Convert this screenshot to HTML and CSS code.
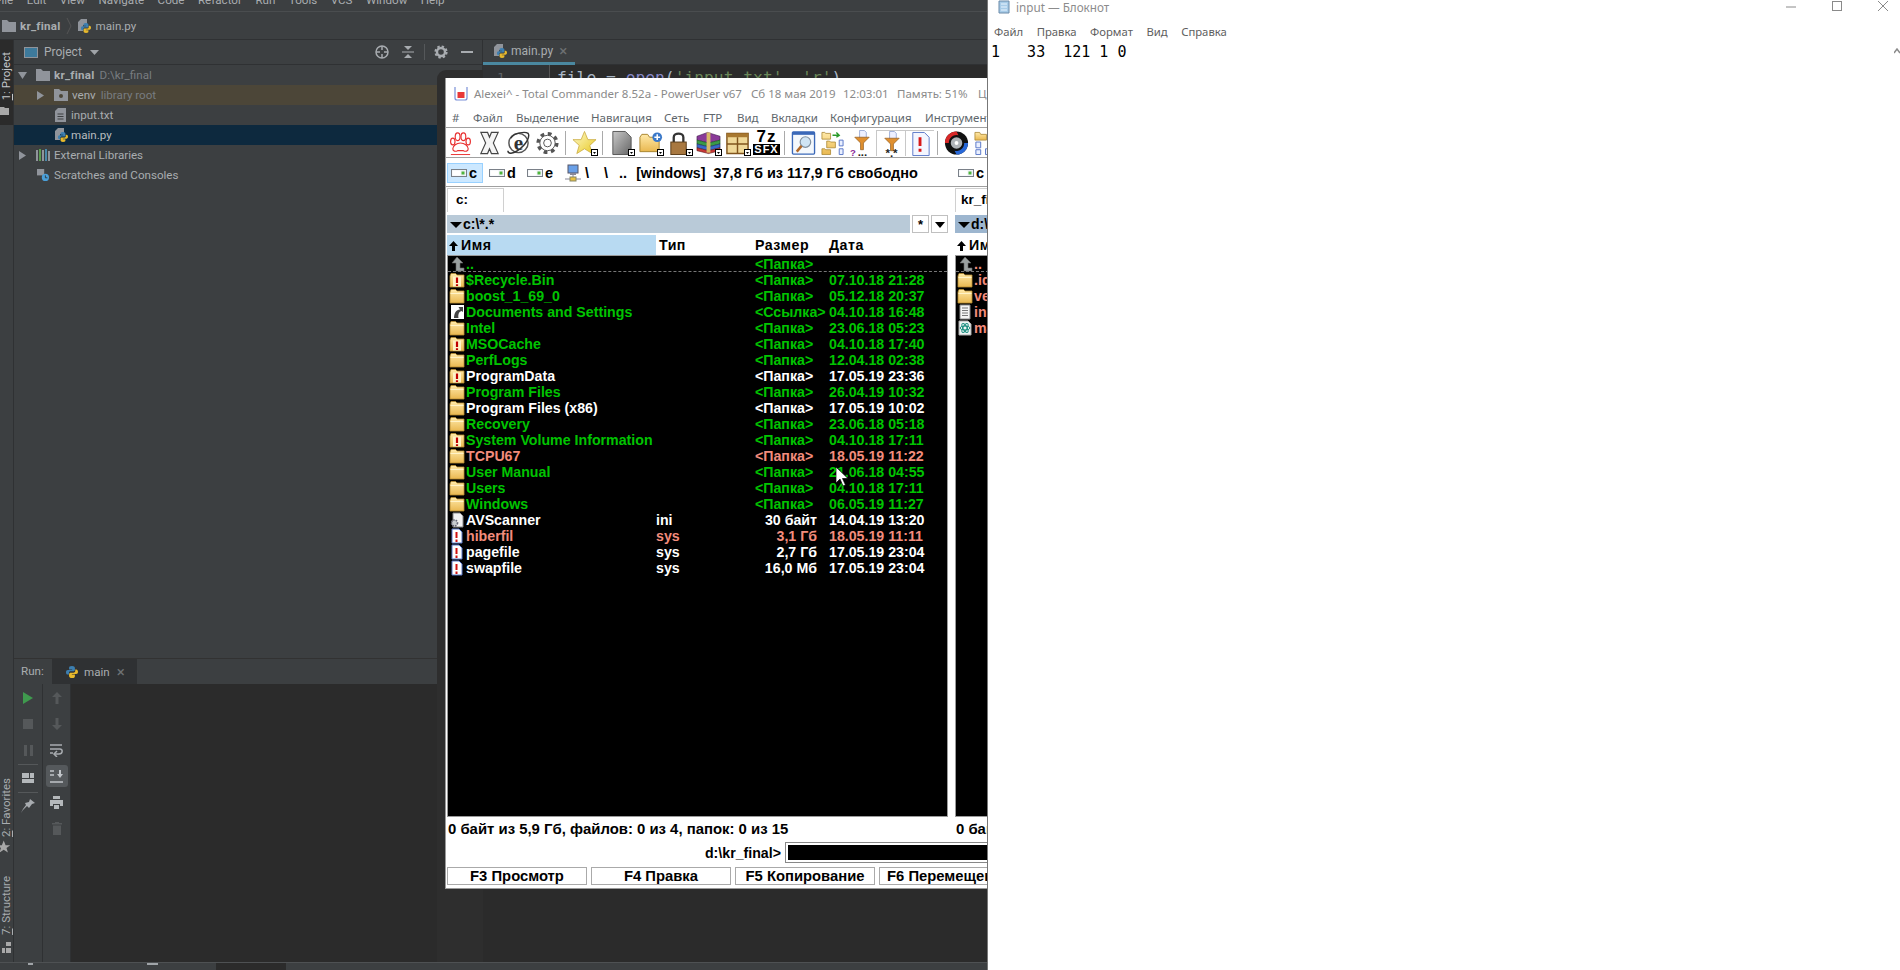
FILE: index.html
```html
<!DOCTYPE html>
<html lang="ru">
<head>
    <meta charset="UTF-8">
    <title>Total Commander</title>
    <link rel="stylesheet" href="styles.css">
</head>
<body>
<svg class="sprite" xmlns="http://www.w3.org/2000/svg">
    <defs>
        <linearGradient id="gr-folder" x1="0" y1="0" x2="0" y2="1"><stop offset="0" stop-color="#ffe9a8"/><stop offset="1" stop-color="#e9b850"/></linearGradient>
        <linearGradient id="gr-star" x1="0" y1="0" x2="1" y2="1"><stop offset="0" stop-color="#fffbd0"/><stop offset="1" stop-color="#e8c820"/></linearGradient>
        <linearGradient id="gr-page" x1="0" y1="0" x2="1" y2="1"><stop offset="0" stop-color="#c8c8c8"/><stop offset="1" stop-color="#666"/></linearGradient>
    </defs>
    <symbol id="py" viewBox="0 0 14 14">
        <path d="M7 0C4 0 3.600 1 3.600 2.400V4H7.200V4.600H2.200C.8 4.600 0 5.600 0 7.200S.8 10 2 10H3.400V8.200C3.400 7 4.300 6.200 5.400 6.200H8.600C9.600 6.200 10.400 5.400 10.400 4.400V2.400C10.400 1 9.200 0 7 0Z" fill="#3d7fb0"/>
        <path d="M7 14C10 14 10.400 13 10.400 11.600V10H6.800V9.400H11.800C13.200 9.400 14 8.400 14 6.800S13.200 4 12 4H10.800V5.800C10.800 7 9.700 7.800 8.600 7.800H5.400C4.400 7.800 3.600 8.600 3.600 9.600V11.600C3.600 13 4.800 14 7 14Z" fill="#e8b92c"/>
    </symbol>
    <symbol id="py-doc" viewBox="0 0 14 14">
        <path d="M3 0H9V6H5V12H0V3Z" fill="#90949b"/>
        <use href="#py" x="3" y="4" width="10" height="10"/>
    </symbol>
    <symbol id="ij-folder" viewBox="0 0 14 12">
        <path d="M0 0H5L7 2H14V12H0Z" fill="#90949b"/>
    </symbol>
    <symbol id="f-plain" viewBox="0 0 16 16">
        <path d="M1 4V15H15V3H8L6.500 1.500H2Z" fill="url(#gr-folder)" stroke="#b58a30" stroke-width=".8"/>
        <path d="M1.500 5.500H14.500" stroke="#fff3c8"/>
    </symbol>
    <symbol id="f-warn" viewBox="0 0 16 16">
        <path d="M1 4V15H15V3H8L6.500 1.500H2Z" fill="url(#gr-folder)" stroke="#b58a30" stroke-width=".8"/>
        <rect x="4" y="4.500" width="8" height="10" fill="#fff3c8"/>
        <path d="M8 5.500V11M8 12.200V14" stroke="#c00000" stroke-width="2.200"/>
    </symbol>
    <symbol id="f-link" viewBox="0 0 16 16">
        <rect x="2" y="1" width="13" height="14" fill="#fff"/>
        <path d="M5 14C5 9 7 6 11 5.500L9.500 3H14V8L12.500 7C9.500 8 9 11 9.500 14Z" fill="#444"/>
    </symbol>
    <symbol id="f-up" viewBox="0 0 16 16">
        <path d="M8 1L14 7H11V12H15V15H7V7H3Z" fill="#9aa0a0" stroke="#666" stroke-width=".6"/>
    </symbol>
    <symbol id="f-sys" viewBox="0 0 16 16">
        <path d="M3 1H10L13 4V15H3Z" fill="#fff" stroke="#5a78c8"/>
        <path d="M7.500 4V10M7.500 11.500V14" stroke="#d01010" stroke-width="2"/>
    </symbol>
    <symbol id="f-ini" viewBox="0 0 16 16">
        <path d="M4 1H11L14 4V15H4Z" fill="#f2f2f2" stroke="#888"/>
        <circle cx="5.500" cy="11" r="3" fill="#c8ccd0" stroke="#667" stroke-width="1.600" stroke-dasharray="1.500 1"/>
    </symbol>
    <symbol id="f-txt" viewBox="0 0 16 16">
        <path d="M3 1H13V15H3Z" fill="#f4f4f4" stroke="#888"/>
        <path d="M5 4H11M5 6.500H11M5 9H11M5 11.500H11" stroke="#777"/>
    </symbol>
    <symbol id="f-atom" viewBox="0 0 16 16">
        <path d="M2 1H11L14 4V15H2Z" fill="#eef4f4" stroke="#aaa"/>
        <g fill="none" stroke="#1d8f80"><ellipse cx="8" cy="8" rx="5" ry="2"/><ellipse cx="8" cy="8" rx="5" ry="2" transform="rotate(60 8 8)"/><ellipse cx="8" cy="8" rx="5" ry="2" transform="rotate(120 8 8)"/></g>
    </symbol>
    <symbol id="hdd" viewBox="0 0 16 8">
        <rect x=".5" y=".5" width="15" height="7" fill="#eef2f6" stroke="#7a8088"/>
        <rect x="1.500" y="1.500" width="8" height="5" fill="#fff"/>
        <rect x="10.500" y="2.500" width="3" height="3" fill="#4fb43c"/>
    </symbol>
    <symbol id="drop" viewBox="0 0 7 7">
        <rect x=".5" y=".5" width="6" height="6" fill="#fff" stroke="#000"/>
        <path d="M2 3H5L3.500 5Z" fill="#000"/>
    </symbol>
    <symbol id="up-arrow" viewBox="0 0 9 10">
        <path d="M4.500 0L9 5H6V10H3V5H0Z" fill="#000"/>
    </symbol>
</svg>

<div class="ide">
    <div class="ide-menu">
        <span>File</span><span>Edit</span><span>View</span><span>Navigate</span><span>Code</span><span>Refactor</span><span>Run</span><span>Tools</span><span>VCS</span><span>Window</span><span>Help</span>
    </div>
    <div class="ide-nav">
        <svg class="ic14"><use href="#ij-folder"/></svg>
        <b>kr_final</b>
        <svg class="nav-sep" viewBox="0 0 6 18"><path d="M1 1L5 9L1 17" fill="none" stroke="#555"/></svg>
        <span class="py-file"><svg class="ic14"><use href="#py-doc"/></svg></span>
        <span>main.py</span>
    </div>
    <div class="ide-main">
        <div class="strip">
            <div class="strip-active">
                <span class="strip-label"><u>1</u>: Project</span>
                <svg class="strip-icon" viewBox="0 0 13 8"><path d="M0 0H4L5 1H9V8H0Z" fill="#a8a8a8"/></svg>
            </div>
            <div class="strip-spacer"></div>
            <span class="strip-label"><u>2</u>: Favorites</span>
            <svg class="strip-star" viewBox="0 0 14 14"><path d="M4 0L6 5H11L7 8L8.500 13L4 10L-.5 13L1 8L-3 5H2Z" fill="#a8a8a8"/></svg>
            <span class="strip-label strip-gap"><u>7</u>: Structure</span>
            <svg class="strip-icon2" viewBox="0 0 9 11"><path d="M4 0H9V4H4ZM0 6H3V11H0ZM4 6H9V11H4Z" fill="#a8a8a8"/></svg>
        </div>
        <div class="workspace">
            <div class="top-area">
                <div class="project">
                    <div class="project-head">
                        <svg class="project-ico" viewBox="0 0 14 11"><rect x=".5" y=".5" width="13" height="10" fill="#3d7a9c" stroke="#90949b"/></svg>
                        <span class="project-title">Project</span>
                        <svg class="project-arrow" viewBox="0 0 9 5"><path d="M0 0H9L4.500 5Z" fill="#a0a4a8"/></svg>
                        <span class="flex-fill"></span>
                        <span class="head-tool"><svg viewBox="0 0 14 14" width="14" height="14"><circle cx="7" cy="7" r="6" fill="none" stroke="#a8acb0" stroke-width="1.500"/><path d="M7 1V5M7 9V13M1 7H5M9 7H13" stroke="#a8acb0" stroke-width="1.500"/></svg></span>
                        <span class="head-tool"><svg viewBox="0 0 12 14" width="12" height="14"><path d="M0 7H12" stroke="#a8acb0"/><path d="M2 1H10L6 5ZM2 13H10L6 9Z" fill="#a8acb0"/></svg></span>
                        <span class="head-sep"></span>
                        <span class="head-tool"><svg viewBox="0 0 14 14" width="14" height="14"><circle cx="7" cy="7" r="4" fill="none" stroke="#a8acb0" stroke-width="2.400"/><circle cx="7" cy="7" r="5.600" fill="none" stroke="#a8acb0" stroke-width="2" stroke-dasharray="2.400 2"/></svg></span>
                        <span class="head-tool"><svg viewBox="0 0 12 3" width="12" height="3"><rect width="12" height="2" fill="#a8acb0"/></svg></span>
                    </div>
                    <div class="tree">
                        <div class="tree-row d0"><svg class="arr" viewBox="0 0 9 9"><path d="M0 1H9L4.500 8Z" fill="#90949b"/></svg><svg class="ic14"><use href="#ij-folder"/></svg><b>kr_final</b><span class="muted">D:\kr_final</span></div>
                        <div class="tree-row d1 row-lib"><svg class="arr" viewBox="0 0 9 9"><path d="M1 0L8 4.500L1 9Z" fill="#90949b"/></svg><svg class="ic14" viewBox="0 0 14 12"><path d="M0 0H5L7 2H14V12H0Z" fill="#90949b"/><circle cx="7" cy="7" r="2" fill="#4c4638"/></svg><span>venv</span><span class="muted">library root</span></div>
                        <div class="tree-row d2"><svg class="ic-doc" viewBox="0 0 11 14"><path d="M3 0H11V14H0V3Z" fill="#90949b"/><path d="M2.500 6H8.500M2.500 8.500H8.500M2.500 11H8.500" stroke="#3c3f41"/></svg><span>input.txt</span></div>
                        <div class="tree-row d2 row-sel"><span class="py-file"><svg class="ic14"><use href="#py-doc"/></svg></span><span>main.py</span></div>
                        <div class="tree-row d0"><svg class="arr" viewBox="0 0 9 9"><path d="M1 0L8 4.500L1 9Z" fill="#90949b"/></svg><svg class="ic14" viewBox="0 0 14 12"><path d="M1 1V12M4 0V12M7 1V12M10 0V12M13 2V12" stroke-width="2" stroke="#90949b"/><path d="M4 0V12" stroke="#5a9a50" stroke-width="2"/><path d="M10 0V12" stroke="#4a88a8" stroke-width="2"/></svg><span>External Libraries</span></div>
                        <div class="tree-row d0"><span class="arr"></span><svg class="ic14" viewBox="0 0 15 15"><path d="M0 0H9V8H0Z" fill="#90949b"/><circle cx="10.500" cy="10.500" r="4.500" fill="#4a9fd8"/><path d="M10.500 8V11H13" stroke="#2b2b2b" fill="none"/></svg><span>Scratches and Consoles</span></div>
                    </div>
                </div>
                <div class="editor">
                    <div class="editor-tabs">
                        <div class="editor-tab"><span class="py-file"><svg class="ic14"><use href="#py-doc"/></svg></span><span>main.py</span><span class="tab-x">×</span></div>
                    </div>
                    <div class="editor-body">
                        <div class="gutter">1</div>
                        <div class="code">file = <span class="code-fn">open</span>(<span class="code-str">'input.txt', 'r'</span>)</div>
                    </div>
                </div>
            </div>
            <div class="run">
                <div class="run-head">
                    <span class="run-label">Run:</span>
                    <div class="run-tab"><svg class="ic14"><use href="#py"/></svg><span>main</span><span class="tab-x">×</span></div>
                </div>
                <div class="run-body">
                    <div class="run-tools">
                        <span class="tool"><svg viewBox="0 0 10 12" width="10" height="12"><path d="M0 0L10 6L0 12Z" fill="#3f9a4e"/></svg></span>
                        <span class="tool"><svg viewBox="0 0 10 10" width="10" height="10"><rect width="10" height="10" fill="#55585a"/></svg></span>
                        <span class="tool"><svg viewBox="0 0 9 11" width="9" height="11"><path d="M0 0H3V11H0ZM6 0H9V11H6Z" fill="#55585a"/></svg></span>
                        <span class="tool-sep"></span>
                        <span class="tool"><svg viewBox="0 0 12 10" width="12" height="10"><path d="M0 0H7V5H0ZM8 0H12V5H8ZM0 6H12V10H0Z" fill="#b4b8bb"/></svg></span>
                        <span class="tool-sep"></span>
                        <span class="tool"><svg viewBox="0 0 14 14" width="14" height="14"><path d="M9 0L14 4L11 5L8 9L6 7L2 11L0 14L2 10L5 6L4 4L8 3Z" fill="#a8acb0"/></svg></span>
                    </div>
                    <div class="run-tools">
                        <span class="tool"><svg viewBox="0 0 10 12" width="10" height="12"><path d="M5 0L10 5H6.500V12H3.500V5H0Z" fill="#55585a"/></svg></span>
                        <span class="tool"><svg viewBox="0 0 10 12" width="10" height="12"><path d="M5 12L10 7H6.500V0H3.500V7H0Z" fill="#55585a"/></svg></span>
                        <span class="tool"><svg viewBox="0 0 13 13" width="13" height="13"><path d="M0 1H12M0 5H10C13 5 13 10 9 10H5" fill="none" stroke="#a8acb0" stroke-width="1.500"/><path d="M0 9H3M7 7L4 10L7 13" fill="none" stroke="#a8acb0" stroke-width="1.500"/></svg></span>
                        <span class="tool tool-on"><svg viewBox="0 0 13 13" width="13" height="13"><path d="M0 1H4M0 5H4M0 12H13" stroke="#c0c4c8" stroke-width="1.500"/><path d="M7 4H13L10 8ZM9 0H11V5H9Z" fill="#c0c4c8"/></svg></span>
                        <span class="tool"><svg viewBox="0 0 13 13" width="13" height="13"><path d="M3 0H10V3H3ZM0 4H13V10H10V8H3V10H0ZM4 9H9V13H4Z" fill="#b4b8bb"/></svg></span>
                        <span class="tool"><svg viewBox="0 0 10 13" width="10" height="13"><path d="M3 0H7V1H10V2.500H0V1H3ZM1 3.500H9V13H1Z" fill="#55585a"/></svg></span>
                    </div>
                    <div class="run-output"></div>
                </div>
            </div>
        </div>
    </div>
    <div class="ide-status"><i class="st-a"></i><i class="st-b"></i><i class="st-c"></i></div>
</div>

<div class="tc-shadow"></div>

<div class="tc">
    <div class="tc-title">
        <svg class="tc-logo" viewBox="0 0 14 15"><path d="M1 1V12C1 13.500 2 14 3 14H11C12 14 13 13.500 13 12V1" fill="none" stroke="#7a90d8" stroke-width="1.200"/><rect x="3.500" y="6" width="7" height="6" fill="#e83838"/></svg>
        <span class="tt-main">Alexei^ - Total Commander 8.52a - PowerUser v67</span>
        <span class="tt-date">Сб 18 мая 2019</span>
        <span class="tt-time">12:03:01</span>
        <span class="tt-mem">Память: 51%</span>
        <span class="tt-cpu">Ц</span>
    </div>
    <div class="tc-menu">
        <span class="m1">#</span><span class="m2">Файл</span><span class="m3">Выделение</span><span class="m4">Навигация</span><span class="m5">Сеть</span><span class="m6">FTP</span><span class="m7">Вид</span><span class="m8">Вкладки</span><span class="m9">Конфигурация</span><span class="m10">Инструменты</span>
    </div>
    <div class="tc-toolbar">
        <span class="tb"><svg viewBox="0 0 26 26"><g fill="#fff" stroke="#e83030" stroke-width="1.200"><path d="M13 13C9 13 5 16 5 19C5 22 8 22 10 21H16C18 22 21 22 21 19C21 16 17 13 13 13Z"/><ellipse cx="5" cy="11.500" rx="2.300" ry="3.500"/><ellipse cx="10" cy="6.500" rx="2.500" ry="4"/><ellipse cx="16" cy="6.500" rx="2.500" ry="4"/><ellipse cx="21" cy="11.500" rx="2.300" ry="3.500"/></g><path d="M3 25H23" stroke="#e83030"/></svg></span>
        <span class="tb"><svg viewBox="0 0 26 26"><path d="M4 2H11L13 7L15 2H22L17 13L22 24H15L13 19L11 24H4L9 13Z" fill="#f4f4f4" stroke="#444" stroke-width="1.200"/></svg></span>
        <span class="tb"><svg viewBox="0 0 26 26"><circle cx="13" cy="13" r="10" fill="#fff" stroke="#555" stroke-width="1.500"/><path d="M5 8C9 2 20 1 23 3C25 6 22 14 12 21C6 25 2 24 2 21" fill="none" stroke="#333" stroke-width="1.500"/><text x="13" y="20" text-anchor="middle" class="svg-e">e</text></svg></span>
        <span class="tb"><svg viewBox="0 0 26 26"><circle cx="13" cy="13" r="9.500" fill="none" stroke="#555" stroke-width="4" stroke-dasharray="3.800 3.660"/><circle cx="13" cy="13" r="8" fill="#fff" stroke="#555"/><circle cx="13" cy="13" r="4" fill="#fff" stroke="#555"/></svg></span>
        <span class="tb-sep"></span>
        <span class="tb"><svg viewBox="0 0 26 26"><path d="M13 1L16.500 9.500H25L18.500 15.500L21 24L13 19L5 24L7.500 15.500L1 9.500H9.500Z" fill="url(#gr-star)" stroke="#c8a838" stroke-width=".8"/></svg><svg class="tb-drop"><use href="#drop"/></svg></span>
        <span class="tb-sep"></span>
        <span class="tb"><svg viewBox="0 0 26 26"><path d="M4 1H17L23 7V25H4Z" fill="url(#gr-page)" stroke="#555"/></svg><svg class="tb-drop"><use href="#drop"/></svg></span>
        <span class="tb"><svg viewBox="0 0 26 26"><path d="M2 7L4 4H10L12 7H22V22H2Z" fill="url(#gr-folder)" stroke="#a88430"/><circle cx="20" cy="7" r="5" fill="#3a78c8"/><path d="M20 4V10M17 7H23" stroke="#fff" stroke-width="1.600"/></svg><svg class="tb-drop"><use href="#drop"/></svg></span>
        <span class="tb"><svg viewBox="0 0 26 26"><path d="M7 12V7C7 2 17 2 17 7V12" fill="none" stroke="#333" stroke-width="2.400"/><rect x="4" y="12" width="16" height="13" fill="#a87840" stroke="#5a3c18"/></svg><svg class="tb-drop"><use href="#drop"/></svg></span>
        <span class="tb"><svg viewBox="0 0 26 26"><path d="M1 6L12 2L25 6V10L13 13L1 10Z" fill="#8a3a98" stroke="#3a1a48" stroke-width=".6"/><path d="M1 10L13 13L25 10V14L13 17L1 14Z" fill="#3a9a48" stroke="#1a4a20" stroke-width=".6"/><path d="M1 14L13 17L25 14V18L13 21L1 18Z" fill="#3868c8" stroke="#182a58" stroke-width=".6"/><path d="M1 18L13 21L25 18V21L13 24L1 21Z" fill="#c83838" stroke="#581818" stroke-width=".6"/><rect x="11" y="2" width="4" height="21" fill="#d8b868"/></svg><svg class="tb-drop"><use href="#drop"/></svg></span>
        <span class="tb"><svg viewBox="0 0 26 26"><path d="M2 3H24V24H2Z" fill="#f0d898" stroke="#80541c" stroke-width="1.500"/><path d="M2 3H24V7H2Z" fill="#a87830"/><path d="M2 14H24M13 7V24" stroke="#80541c" stroke-width="1.500"/></svg><svg class="tb-drop"><use href="#drop"/></svg></span>
        <span class="tb tb-7z"><span class="t7">7z</span><span class="tsfx">SFX</span></span>
        <span class="tb-sep"></span>
        <span class="tb"><svg viewBox="0 0 26 26"><rect x="1.500" y="1.500" width="23" height="23" rx="1" fill="#f4f8fc" stroke="#3a68b8" stroke-width="1.400"/><path d="M1.500 1.500H24.500V4.500H1.500Z" fill="#3a68b8"/><circle cx="15" cy="12" r="5.500" fill="#cfe4f4" stroke="#8090a0" stroke-width="1.200"/><path d="M11 16L6 22" stroke="#b06828" stroke-width="2.600"/></svg></span>
        <span class="tb"><svg viewBox="0 0 26 26"><path d="M2 2H5L6 3H11V9H2ZM7 11H10L11 12H16V18H7ZM2 19H5L6 20H11V25H2Z" fill="url(#gr-folder)" stroke="#a88430" stroke-width=".8"/><path d="M13 5H20M17 2L20 5L17 7" fill="none" stroke="#2a9a2a" stroke-width="1.500"/><path d="M20 10H24V16H20ZM20 19H24V25H20Z" fill="#eaf0ff" stroke="#5a78c8"/></svg></span>
        <span class="tb"><svg viewBox="0 0 26 26"><path d="M11 0H16L18 2V8H11Z" fill="#eef0ff" stroke="#7a90c8" stroke-width=".7"/><path d="M6 7H21L15 13V20H12V13Z" fill="#e09030" stroke="#905818" stroke-width=".7"/><text x="1" y="26" class="svg-q">?</text><text x="9" y="26" class="svg-d">...</text></svg></span>
        <span class="tb tb-hover"><svg viewBox="0 0 26 26"><path d="M11 0H16L18 2V8H11Z" fill="#eef0ff" stroke="#7a90c8" stroke-width=".7"/><path d="M6 7H21L15 13V20H12V13Z" fill="#e09030" stroke="#905818" stroke-width=".7"/><text x="13" y="26" text-anchor="middle" class="svg-d">*.*</text></svg></span>
        <span class="tb tb-hover"><svg viewBox="0 0 26 26"><path d="M5 1H17L22 6V25H5Z" fill="#f4f6ff" stroke="#5a78c8"/><path d="M12.500 6V15M12.500 18V21" stroke="#d81818" stroke-width="3"/></svg></span>
        <span class="tb-sep"></span>
        <span class="tb"><svg viewBox="0 0 26 26"><circle cx="13" cy="13" r="12" fill="#111"/><path d="M1 13A12 12 0 0 1 13 1L15 5A8 8 0 0 0 5 13Z" fill="#d82828"/><path d="M25 13A12 12 0 0 1 13 25L11 21A8 8 0 0 0 21 13Z" fill="#2868d8"/><circle cx="13" cy="13" r="6" fill="#b0b4b8"/><circle cx="13" cy="13" r="2" fill="#fff"/></svg></span>
        <span class="tb"><svg viewBox="0 0 26 26"><path d="M2 2H7L8 4H14V10H2Z" fill="url(#gr-folder)" stroke="#a88430" stroke-width=".8"/><path d="M3 12H8V18H3ZM3 20H8V25H3ZM13 19H18V25H13Z" fill="#eaf0ff" stroke="#5a78c8"/></svg></span>
    </div>
    <div class="tc-drives">
        <span class="drive drive-on"><svg class="hdd"><use href="#hdd"/></svg><b>c</b></span>
        <span class="drive"><svg class="hdd"><use href="#hdd"/></svg><b>d</b></span>
        <span class="drive"><svg class="hdd"><use href="#hdd"/></svg><b>e</b></span>
        <svg class="net" viewBox="0 0 16 18"><rect x="3" y="1" width="10" height="8" fill="#6aa0e8" stroke="#556"/><rect x="5" y="9" width="6" height="2" fill="#889"/><path d="M0 15H16M8 11V15" stroke="#889"/><rect x="5" y="13" width="6" height="4" fill="#e8c040" stroke="#886"/></svg>
        <b class="d-root">\</b><b class="d-root2">\</b><b class="d-up">..</b>
        <b class="d-vol">[windows]</b>
        <b class="d-free">37,8 Гб из 117,9 Гб свободно</b>
        <span class="drive drive-right"><svg class="hdd"><use href="#hdd"/></svg><b>c</b></span>
    </div>
    <div class="tc-panels">
        <section class="panel panel-left">
            <div class="panel-tabs"><span class="panel-tab">c:</span></div>
            <div class="path-row">
                <div class="path-bar"><span class="tri"></span>c:\*.*</div>
                <span class="path-btn">*</span>
                <span class="path-btn"><span class="tri"></span></span>
            </div>
            <div class="list-head">
                <span class="col-name col-on"><svg class="up-arrow"><use href="#up-arrow"/></svg>Имя</span>
                <span class="col-ext">Тип</span>
                <span class="col-size">Размер</span>
                <span class="col-date">Дата</span>
            </div>
            <div class="list">
                <div class="row green row-cursor"><svg class="fi"><use href="#f-up"/></svg><span>..</span><span></span><span>&lt;Папка&gt;</span><span></span></div>
                <div class="row green"><svg class="fi"><use href="#f-warn"/></svg><span>$Recycle.Bin</span><span></span><span>&lt;Папка&gt;</span><span>07.10.18 21:28</span></div>
                <div class="row green"><svg class="fi"><use href="#f-plain"/></svg><span>boost_1_69_0</span><span></span><span>&lt;Папка&gt;</span><span>05.12.18 20:37</span></div>
                <div class="row green"><svg class="fi"><use href="#f-link"/></svg><span>Documents and Settings</span><span></span><span>&lt;Ссылка&gt;</span><span>04.10.18 16:48</span></div>
                <div class="row green"><svg class="fi"><use href="#f-plain"/></svg><span>Intel</span><span></span><span>&lt;Папка&gt;</span><span>23.06.18 05:23</span></div>
                <div class="row green"><svg class="fi"><use href="#f-warn"/></svg><span>MSOCache</span><span></span><span>&lt;Папка&gt;</span><span>04.10.18 17:40</span></div>
                <div class="row green"><svg class="fi"><use href="#f-plain"/></svg><span>PerfLogs</span><span></span><span>&lt;Папка&gt;</span><span>12.04.18 02:38</span></div>
                <div class="row white"><svg class="fi"><use href="#f-warn"/></svg><span>ProgramData</span><span></span><span>&lt;Папка&gt;</span><span>17.05.19 23:36</span></div>
                <div class="row green"><svg class="fi"><use href="#f-plain"/></svg><span>Program Files</span><span></span><span>&lt;Папка&gt;</span><span>26.04.19 10:32</span></div>
                <div class="row white"><svg class="fi"><use href="#f-plain"/></svg><span>Program Files (x86)</span><span></span><span>&lt;Папка&gt;</span><span>17.05.19 10:02</span></div>
                <div class="row green"><svg class="fi"><use href="#f-plain"/></svg><span>Recovery</span><span></span><span>&lt;Папка&gt;</span><span>23.06.18 05:18</span></div>
                <div class="row green"><svg class="fi"><use href="#f-warn"/></svg><span>System Volume Information</span><span></span><span>&lt;Папка&gt;</span><span>04.10.18 17:11</span></div>
                <div class="row salmon"><svg class="fi"><use href="#f-plain"/></svg><span>TCPU67</span><span></span><span>&lt;Папка&gt;</span><span>18.05.19 11:22</span></div>
                <div class="row green"><svg class="fi"><use href="#f-plain"/></svg><span>User Manual</span><span></span><span>&lt;Папка&gt;</span><span>21.06.18 04:55</span></div>
                <div class="row green"><svg class="fi"><use href="#f-plain"/></svg><span>Users</span><span></span><span>&lt;Папка&gt;</span><span>04.10.18 17:11</span></div>
                <div class="row green"><svg class="fi"><use href="#f-plain"/></svg><span>Windows</span><span></span><span>&lt;Папка&gt;</span><span>06.05.19 11:27</span></div>
                <div class="row white"><svg class="fi"><use href="#f-ini"/></svg><span>AVScanner</span><span>ini</span><span class="num">30 байт</span><span>14.04.19 13:20</span></div>
                <div class="row salmon"><svg class="fi"><use href="#f-sys"/></svg><span>hiberfil</span><span>sys</span><span class="num">3,1 Гб</span><span>18.05.19 11:11</span></div>
                <div class="row white"><svg class="fi"><use href="#f-sys"/></svg><span>pagefile</span><span>sys</span><span class="num">2,7 Гб</span><span>17.05.19 23:04</span></div>
                <div class="row white"><svg class="fi"><use href="#f-sys"/></svg><span>swapfile</span><span>sys</span><span class="num">16,0 Мб</span><span>17.05.19 23:04</span></div>
            </div>
            <div class="panel-status">0 байт из 5,9 Гб, файлов: 0 из 4, папок: 0 из 15</div>
        </section>
        <section class="panel panel-right">
            <div class="panel-tabs"><span class="panel-tab">kr_final</span></div>
            <div class="path-row">
                <div class="path-bar path-active"><span class="tri"></span>d:\kr_final\*.*</div>
            </div>
            <div class="list-head">
                <span class="col-name"><svg class="up-arrow"><use href="#up-arrow"/></svg>Имя</span>
            </div>
            <div class="list">
                <div class="row salmon row-cursor"><svg class="fi"><use href="#f-up"/></svg><span>..</span></div>
                <div class="row salmon"><svg class="fi"><use href="#f-plain"/></svg><span>.idea</span></div>
                <div class="row salmon"><svg class="fi"><use href="#f-plain"/></svg><span>venv</span></div>
                <div class="row salmon"><svg class="fi"><use href="#f-txt"/></svg><span>input</span></div>
                <div class="row salmon"><svg class="fi"><use href="#f-atom"/></svg><span>main</span></div>
            </div>
            <div class="panel-status">0 байт из 1 Кб</div>
        </section>
    </div>
    <div class="tc-cmd">
        <span class="cmd-label">d:\kr_final&gt;</span>
        <span class="cmd-input"></span>
    </div>
    <div class="tc-keys">
        <span class="key">F3 Просмотр</span>
        <span class="key">F4 Правка</span>
        <span class="key">F5 Копирование</span>
        <span class="key key-last">F6 Перемещение</span>
    </div>
</div>

<svg class="cursor" viewBox="0 0 12 19"><path d="M0 0V16L4 12L7 19L9.500 18L6.500 11.500H12Z" fill="#fff" stroke="#000" stroke-width=".7"/></svg>

<div class="notepad">
    <div class="np-title">
        <svg class="np-logo" viewBox="0 0 14 14"><path d="M2 1H12V13H2Z" fill="#a8cce8" stroke="#6a8aa8"/><path d="M4 4H10M4 7H10M4 10H10" stroke="#e8f4ff"/></svg>
        <span>input — Блокнот</span>
        <span class="flex-fill"></span>
        <span class="np-btn"><svg viewBox="0 0 10 10" width="10" height="10"><path d="M0 6H10" stroke="#8a8a8a"/></svg></span>
        <span class="np-btn"><svg viewBox="0 0 10 10" width="10" height="10"><rect x=".5" y=".5" width="9" height="9" fill="none" stroke="#8a8a8a"/></svg></span>
        <span class="np-btn"><svg viewBox="0 0 10 10" width="10" height="10"><path d="M0 0L10 10M10 0L0 10" stroke="#8a8a8a"/></svg></span>
    </div>
    <div class="np-menu"><span>Файл</span><span>Правка</span><span>Формат</span><span>Вид</span><span>Справка</span></div>
    <div class="np-text">1   33  121 1 0</div>
    <svg class="np-chev" viewBox="0 0 6 6"><path d="M0 5L3 1L6 5" fill="none" stroke="#8a8a8a" stroke-width="1.500"/></svg>
</div>
</body>
</html>
```

FILE: styles.css
```css
* {
    margin: 0;
    padding: 0;
    box-sizing: border-box;
}

html, body {
    width: 1900px;
    height: 970px;
    overflow: hidden;
}

body {
    position: relative;
    background: #2b2b2b;
    font-family: "Noto Sans", sans-serif;
}

.sprite {
    display: block;
    width: 0;
    height: 0;
}

.flex-fill {
    flex: 1;
}

.ic14 {
    width: 14px;
    height: 12px;
    flex: none;
}

/* IDE window */
.ide {
    position: absolute;
    left: 0;
    top: 0;
    width: 987px;
    height: 970px;
    display: flex;
    flex-direction: column;
    background: #3c3f41;
    color: #a9adb0;
    font-family: Roboto, sans-serif;
    font-size: 11.6px;
}

.ide-menu {
    height: 11px;
    display: flex;
    align-items: flex-end;
    gap: 13.5px;
    margin-left: -5px;
    overflow: hidden;
    flex: none;
}

.ide-menu span {
    line-height: 16px;
    margin-bottom: 3px;
}

.ide-nav {
    height: 29px;
    flex: none;
    display: flex;
    align-items: center;
    padding-left: 2px;
    border-top: 1px solid #4a4d4f;
    border-bottom: 1px solid #2f3133;
    gap: 4px;
}

.ide-nav b,
.tree-row b {
    letter-spacing: .25px;
}

.ide-nav .py-file {
    margin-right: 0;
}

.nav-sep {
    width: 6px;
    height: 18px;
    margin: 0 2px 0 1px;
}

.py-file {
    display: inline-flex;
    width: 14px;
    height: 14px;
    flex: none;
}

.py-file .ic14 {
    height: 14px;
}

.ide-main {
    flex: 1;
    display: flex;
    min-height: 0;
}

.strip {
    width: 14px;
    flex: none;
    display: flex;
    flex-direction: column;
    align-items: center;
    border-right: 1px solid #2f3133;
    padding-bottom: 9px;
    overflow: hidden;
    font-size: 11.5px;
}

.strip-active {
    width: 13px;
    height: 85px;
    flex: none;
    background: #2b2b2b;
    display: flex;
    flex-direction: column;
    align-items: center;
    padding-top: 12px;
    color: #c4c8cb;
}

.strip-label {
    writing-mode: vertical-rl;
    transform: rotate(180deg);
    line-height: 13px;
    white-space: nowrap;
}

.strip-icon {
    width: 13px;
    height: 8px;
    margin-top: 7px;
    flex: none;
}

.strip-spacer {
    flex: 1;
}

.strip-star {
    width: 13px;
    height: 14px;
    margin-top: 3px;
    flex: none;
}

.strip-gap {
    margin-top: 22px;
}

.strip-icon2 {
    width: 13px;
    height: 11px;
    margin-top: 7px;
    flex: none;
}

.workspace {
    flex: 1;
    display: flex;
    flex-direction: column;
    min-width: 0;
}

.top-area {
    height: 618px;
    flex: none;
    display: flex;
}

.project {
    width: 469px;
    flex: none;
    border-right: 1px solid #2f3133;
}

.project-head {
    height: 25px;
    display: flex;
    align-items: center;
    padding: 0 2px 0 10px;
    border-bottom: 1px solid #2f3133;
}

.project-ico {
    width: 14px;
    height: 11px;
}

.project-title {
    margin-left: 6px;
    font-size: 12px;
}

.project-arrow {
    width: 9px;
    height: 5px;
    margin-left: 8px;
}

.head-tool {
    width: 26px;
    display: flex;
    justify-content: center;
}

.head-sep {
    width: 1px;
    height: 16px;
    background: #55585a;
    margin: 0 3px;
}

.tree-row {
    height: 20px;
    display: flex;
    align-items: center;
    white-space: nowrap;
}

.tree-row .muted {
    color: #787c80;
    margin-left: 5px;
}

.arr {
    width: 9px;
    height: 9px;
    flex: none;
    margin-right: 9px;
    display: block;
}

.tree-row .ic14 {
    margin-right: 4px;
}

.d0 {
    padding-left: 4px;
}

.d1 {
    padding-left: 22px;
}

.d2 {
    padding-left: 41px;
}

.ic-doc {
    width: 11px;
    height: 14px;
    margin-right: 5px;
    flex: none;
}

.d2 .py-file {
    margin-right: 2px;
}

.d2 .py-file .ic14 {
    margin-right: 0;
}

.row-lib {
    background: #4c4638;
}

.row-sel {
    background: #0d293e;
    color: #b8bcbf;
}

.editor {
    flex: 1;
    min-width: 0;
    background: #2b2b2b;
}

.editor-tabs {
    height: 25px;
    background: #3c3f41;
    border-bottom: 1px solid #2f3133;
}

.editor-tab {
    width: 92px;
    height: 25px;
    display: flex;
    align-items: center;
    gap: 3px;
    padding-left: 11px;
    border-bottom: 3px solid #4a88a0;
    font-size: 12px;
}

.tab-x {
    color: #6e7173;
    font-size: 15px;
    margin-left: 3px;
}

.editor-body {
    display: flex;
    font-family: "DejaVu Sans Mono", monospace;
    font-size: 16.3px;
    line-height: 20px;
    color: #a9b7c6;
}

.gutter {
    width: 67px;
    height: 20px;
    padding: 3px 0 0 14px;
    background: #313335;
    border-right: 1px solid #555;
    color: #606366;
    font-size: 13px;
}

.code {
    padding: 3px 0 0 7px;
    white-space: pre;
}

.code-fn {
    color: #8888c6;
}

.code-str {
    color: #6a8759;
}

.run {
    flex: 1;
    display: flex;
    flex-direction: column;
    min-height: 0;
    border-top: 1px solid #323232;
}

.run-head {
    height: 25px;
    flex: none;
    display: flex;
}

.run-label {
    width: 38px;
    padding-left: 7px;
    line-height: 25px;
}

.run-tab {
    width: 85px;
    background: #2f3133;
    display: flex;
    align-items: center;
    gap: 5px;
    padding-left: 13px;
}

.run-tab .tab-x {
    margin-left: 2px;
}

.run-body {
    flex: 1;
    display: flex;
    min-height: 0;
}

.run-tools {
    width: 28.500px;
    flex: none;
    display: flex;
    flex-direction: column;
    align-items: center;
    padding: 1px 0 0 1px;
    border-right: 1px solid #2f3133;
}

.tool {
    width: 22px;
    height: 22px;
    margin: 2px 0;
    display: flex;
    align-items: center;
    justify-content: center;
    border-radius: 3px;
}

.tool-on {
    background: #55595c;
}

.tool-sep {
    width: 20px;
    height: 1px;
    background: #55585a;
    margin: 1px 0 0;
}

.run-output {
    flex: 1;
    background: #2b2b2b;
}

.ide-status {
    height: 8px;
    flex: none;
    background: #3c3f41;
    border-top: 1px solid #4e5153;
    display: flex;
}

.ide-status i {
    display: block;
    height: 7px;
}

.ide-status .st-a {
    width: 5px;
    margin-left: 28px;
    height: 2px;
    background: #a0a4a8;
}

.ide-status .st-b {
    width: 11px;
    margin-left: 114px;
    height: 2px;
    background: #a0a4a8;
}

.st-c {
    width: 70px;
    margin-left: 58px;
    background: #2b2b2b;
}

.tc-shadow {
    position: absolute;
    left: 437px;
    top: 70px;
    width: 46px;
    height: 892px;
    background: #2e2e2e;
    border-top-left-radius: 9px;
}

/* Total Commander window */
.tc {
    position: absolute;
    left: 445px;
    top: 78px;
    width: 560px;
    height: 811px;
    background: #fff;
    border-left: 1px solid #9a9a9a;
    border-bottom: 1px solid #9a9a9a;
    display: flex;
    flex-direction: column;
    font-family: "Liberation Sans", sans-serif;
    font-size: 14.2px;
    color: #000;
    overflow: hidden;
}

.tc-title {
    height: 30px;
    flex: none;
    display: flex;
    align-items: center;
    font-family: "Noto Sans", sans-serif;
    font-size: 11.5px;
    color: #8a8a8a;
    white-space: nowrap;
    padding-left: 8px;
}

.tc-logo {
    width: 14px;
    height: 15px;
    flex: none;
}

.tt-main {
    width: 277px;
    margin-left: 6px;
}

.tt-date {
    width: 92px;
}

.tt-time {
    width: 54px;
}

.tt-mem {
    width: 81px;
}

.tc-menu {
    height: 20px;
    flex: none;
    display: flex;
    align-items: center;
    font-family: "Noto Sans", sans-serif;
    font-size: 11.5px;
    color: #5e666c;
    border-bottom: 1px solid #a0a0a0;
    white-space: nowrap;
    padding-left: 6px;
}

.m1 { width: 21px; }
.m2 { width: 43px; }
.m3 { width: 75px; }
.m4 { width: 73px; }
.m5 { width: 39px; }
.m6 { width: 34px; }
.m7 { width: 34px; }
.m8 { width: 59px; }
.m9 { width: 95px; }

.tc-toolbar {
    height: 30px;
    flex: none;
    display: flex;
    align-items: center;
    border-bottom: 1px solid #a0a0a0;
}

.tb {
    position: relative;
    width: 29px;
    height: 26px;
    flex: none;
    display: flex;
    justify-content: center;
}

.tb > svg:first-child {
    width: 25px;
    height: 26px;
}

.tb-hover {
    border: 1px solid #c8c8c8;
    border-bottom: none;
    border-right: none;
}

.tb-drop {
    position: absolute;
    right: 1px;
    bottom: 0;
    width: 7px;
    height: 7px;
}

.tb-7z {
    flex-direction: column;
    align-items: center;
    line-height: 1;
}

.t7 {
    font-size: 17px;
    font-weight: 700;
    line-height: 14px;
    letter-spacing: 1px;
}

.tsfx {
    font-size: 11px;
    font-weight: 700;
    line-height: 11px;
    color: #fff;
    background: #000;
    padding: 0 1px;
    letter-spacing: 1px;
}

.tb-sep {
    width: 1px;
    height: 24px;
    flex: none;
    background: #aaa;
    margin: 0 4px 0 3px;
}

.svg-e {
    font-family: "Liberation Serif", serif;
    font-size: 22px;
    font-weight: 700;
    fill: #333;
}

.svg-q {
    font-family: "Liberation Sans", sans-serif;
    font-size: 10px;
    font-weight: 700;
    fill: #8a2a98;
}

.svg-d {
    font-family: "Liberation Sans", sans-serif;
    font-size: 12px;
    font-weight: 700;
    fill: #222;
}

.tc-drives {
    height: 29px;
    flex: none;
    display: flex;
    align-items: center;
    padding: 2px 0 0 1px;
    border-bottom: 1px solid #a0a0a0;
    font-size: 14.5px;
    white-space: nowrap;
}

.drive {
    width: 36px;
    height: 20px;
    display: flex;
    align-items: center;
    gap: 2px;
    padding-left: 3px;
    flex: none;
    border: 1px solid transparent;
}

.drive + .drive {
    margin-left: 2px;
}

.drive-on {
    background: #cce8ff;
    border-color: #99d1ff;
}

.hdd {
    width: 16px;
    height: 8px;
    flex: none;
}

.net {
    width: 16px;
    height: 18px;
    margin-left: 6px;
    flex: none;
}

.d-root {
    margin-left: 4px;
}

.d-root2 {
    margin-left: 15px;
}

.d-up {
    margin-left: 11px;
}

.d-vol {
    margin-left: 9px;
    font-size: 14.2px;
}

.d-free {
    margin-left: 8px;
}

.drive-right {
    margin-left: 36px;
}

.tc-panels {
    flex: 1;
    min-height: 0;
    display: flex;
    gap: 7px;
    padding-left: 1px;
}

.panel {
    display: flex;
    flex-direction: column;
    min-width: 0;
}

.panel-left {
    width: 501px;
    flex: none;
}

.panel-right {
    flex: 1;
}

.panel-tabs {
    height: 25px;
    flex: none;
    display: flex;
    align-items: flex-end;
}

.panel-tab {
    width: 57px;
    height: 24px;
    border: 1px solid #d0d0d0;
    border-bottom: none;
    padding-left: 8px;
    font-weight: 700;
    font-size: 13.5px;
    line-height: 22px;
}

.panel-right .panel-tab {
    width: 100px;
    padding-left: 5px;
}

.path-row {
    height: 18px;
    flex: none;
    display: flex;
    gap: 2px;
    margin-top: 3px;
}

.path-bar {
    flex: 1;
    background: #b9cad8;
    display: flex;
    align-items: center;
    gap: 1px;
    padding-left: 3px;
    font-size: 14px;
    font-weight: 700;
    white-space: nowrap;
    overflow: hidden;
}

.path-active {
    background: #9db6cf;
}

.tri {
    display: inline-block;
    width: 0;
    height: 0;
    border-left: 6px solid transparent;
    border-right: 6px solid transparent;
    border-top: 6px solid #000;
    margin-top: 2px;
    flex: none;
}

.path-btn {
    width: 17px;
    flex: none;
    border: 1px solid #c0c0c0;
    display: flex;
    align-items: center;
    justify-content: center;
    font-weight: 700;
    font-size: 13px;
}

.path-btn .tri {
    border-left-width: 5px;
    border-right-width: 5px;
}

.list-head {
    height: 20px;
    flex: none;
    margin-top: 2px;
    display: grid;
    grid-template-columns: 209px 99px 74px 1fr;
    font-weight: 700;
    font-size: 14.2px;
    letter-spacing: .5px;
    line-height: 20px;
    white-space: nowrap;
    overflow: hidden;
}

.col-on {
    background: #b8daf2;
}

.col-name {
    padding-left: 2px;
}

.col-ext {
    padding-left: 3px;
}

.up-arrow {
    display: inline-block;
    width: 9px;
    height: 10px;
    margin-right: 3px;
    vertical-align: -1px;
}

.list {
    flex: 1;
    min-height: 0;
    background: #000;
    border: 1px solid #9a9a9a;
    overflow: hidden;
    font-size: 14.2px;
    font-weight: 700;
}

.row {
    height: 16px;
    display: grid;
    grid-template-columns: 18px 190px 99px 74px 100px;
    align-items: center;
    line-height: 16px;
    white-space: nowrap;
}

.row .fi {
    width: 16px;
    height: 16px;
    margin-left: 1px;
}

.row-cursor {
    border-bottom: 1px dashed #777;
}

.num {
    text-align: right;
    padding-right: 12px;
}

.green {
    color: #00c400;
}

.white {
    color: #fff;
}

.salmon {
    color: #f28c7c;
}

.panel-status {
    height: 21px;
    flex: none;
    font-weight: 700;
    font-size: 14.9px;
    line-height: 25px;
    padding-left: 1px;
    white-space: nowrap;
    overflow: hidden;
}

.tc-cmd {
    height: 21px;
    flex: none;
    margin-top: 4px;
    display: flex;
    align-items: center;
}

.cmd-label {
    width: 335px;
    text-align: right;
    margin-right: 4px;
    font-weight: 700;
    font-size: 14.2px;
}

.cmd-input {
    flex: 1;
    height: 21px;
    background: #000;
    border: 3px solid #fff;
    outline: 1px solid #888;
    outline-offset: -1px;
}

.tc-keys {
    height: 18px;
    flex: none;
    margin: 4px 0 3px;
    display: flex;
    gap: 4px;
    padding-left: 1px;
}

.key {
    width: 140px;
    flex: none;
    border: 1px solid #aaa;
    text-align: center;
    font-weight: 700;
    font-size: 14.8px;
    line-height: 16px;
    white-space: nowrap;
}

.key-last {
    text-align: left;
    padding-left: 7px;
}

.cursor {
    position: absolute;
    left: 836px;
    top: 467px;
    width: 12px;
    height: 19px;
}

/* Notepad window */
.notepad {
    position: absolute;
    left: 987px;
    top: 0;
    width: 913px;
    height: 970px;
    background: #fff;
    border-left: 1px solid #777;
    font-family: "Noto Sans", sans-serif;
    font-size: 11.3px;
    color: #5e5e5e;
    overflow: hidden;
}

.np-title {
    height: 14px;
    display: flex;
    align-items: center;
    padding-left: 9px;
    color: #8c8c8c;
    font-size: 11.7px;
}

.np-logo {
    width: 14px;
    height: 14px;
    margin-right: 5px;
    flex: none;
}

.np-btn {
    width: 46px;
    flex: none;
    display: flex;
    justify-content: center;
    align-self: flex-start;
    padding-top: 1px;
}

.np-btn:last-child {
    margin-right: -6px;
}

.np-menu {
    height: 22px;
    margin-top: 6px;
    display: flex;
    gap: 13.5px;
    align-items: center;
    padding-left: 6px;
}

.np-text {
    padding-left: 3px;
    margin-top: 1px;
    font-family: "DejaVu Sans Mono", monospace;
    font-size: 15px;
    line-height: 18px;
    color: #000;
    white-space: pre;
}

.np-chev {
    position: absolute;
    right: 0;
    top: 48px;
    width: 6px;
    height: 6px;
}
```
